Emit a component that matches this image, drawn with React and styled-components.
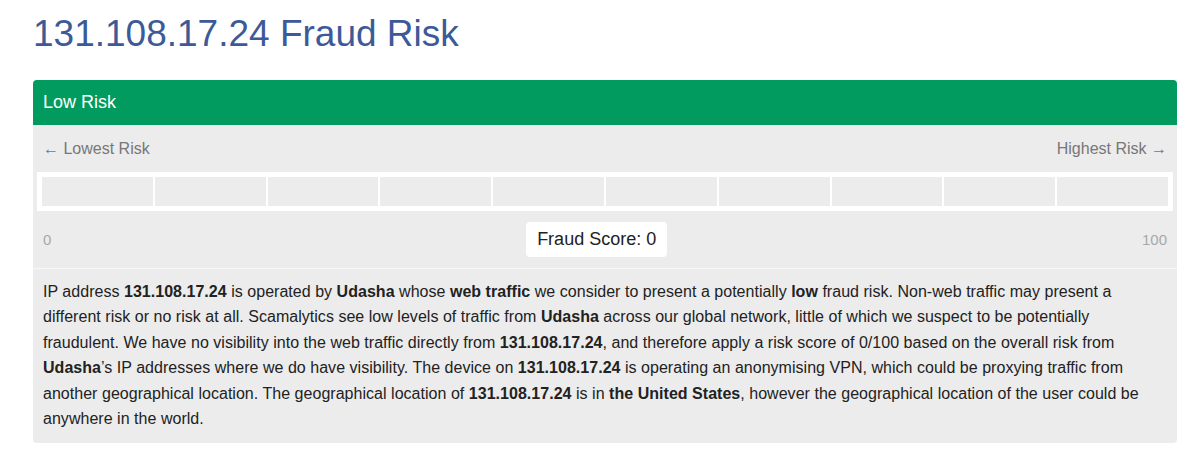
import React from 'react';
import styled, { createGlobalStyle } from 'styled-components';

const GlobalStyle = createGlobalStyle`
  body {
    margin: 0;
    background: #ffffff;
    font-family: "Liberation Sans", Arial, sans-serif;
  }
`;

const Page = styled.div`
  padding: 0 23px 0 33px;
`;

const Title = styled.h1`
  margin: 14px 0 26px;
  font-size: 37px;
  line-height: 40px;
  font-weight: normal;
  color: #3d5a98;
`;

const Card = styled.div`
  width: 1144px;
  background: #ececec;
  border-radius: 4px;
  overflow: hidden;
`;

const Header = styled.div`
  height: 45px;
  line-height: 45px;
  padding: 0 10px;
  background: #019a5f;
  color: #ffffff;
  font-size: 18px;
`;

const Labels = styled.div`
  display: flex;
  justify-content: space-between;
  align-items: center;
  height: 47px;
  padding: 0 10px;
  font-size: 16px;
  color: #777777;
`;

const Bar = styled.div`
  display: flex;
  gap: 2px;
  margin: 0 4px;
  padding: 5px;
  background: #ffffff;
`;

const Segment = styled.div`
  flex: 1;
  height: 29px;
  background: ${(p) => p.$fill || '#ececec'};
`;

const ScoreRow = styled.div`
  display: flex;
  justify-content: space-between;
  align-items: center;
  height: 57px;
  padding: 0 10px;
  font-size: 15px;
  color: #a8a8a8;
  border-bottom: 1px solid #f7f7f7;
`;

const ScoreBox = styled.div`
  padding: 0 11px;
  height: 35px;
  line-height: 35px;
  background: #ffffff;
  border-radius: 4px;
  font-size: 18px;
  color: #222222;
`;

const Text = styled.p`
  margin: 0;
  padding: 10px 12px 12px 10px;
  font-size: 16px;
  line-height: 25.4px;
  letter-spacing: 0.03px;
  color: #222222;
`;

const segments = Array.from({ length: 10 });

export default function App() {
  return (
    <Page>
      <GlobalStyle />
      <Title>131.108.17.24 Fraud Risk</Title>
      <Card>
        <Header>Low Risk</Header>
        <Labels>
          <span>← Lowest Risk</span>
          <span>Highest Risk →</span>
        </Labels>
        <Bar>
          {segments.map((_, i) => (
            <Segment key={i} />
          ))}
        </Bar>
        <ScoreRow>
          <span>0</span>
          <ScoreBox>Fraud Score: 0</ScoreBox>
          <span>100</span>
        </ScoreRow>
        <Text>
          IP address <b>131.108.17.24</b> is operated by <b>Udasha</b> whose <b>web traffic</b> we
          consider to present a potentially <b>low</b> fraud risk. Non-web traffic may present a
          different risk or no risk at all. Scamalytics see low levels of traffic from <b>Udasha</b>{' '}
          across our global network, little of which we suspect to be potentially fraudulent. We
          have no visibility into the web traffic directly from <b>131.108.17.24</b>, and therefore
          apply a risk score of 0/100 based on the overall risk from <b>Udasha</b>’s IP addresses
          where we do have visibility. The device on <b>131.108.17.24</b> is operating an
          anonymising VPN, which could be proxying traffic from another geographical location. The
          geographical location of <b>131.108.17.24</b> is in <b>the United States</b>, however the
          geographical location of the user could be anywhere in the world.
        </Text>
      </Card>
    </Page>
  );
}
